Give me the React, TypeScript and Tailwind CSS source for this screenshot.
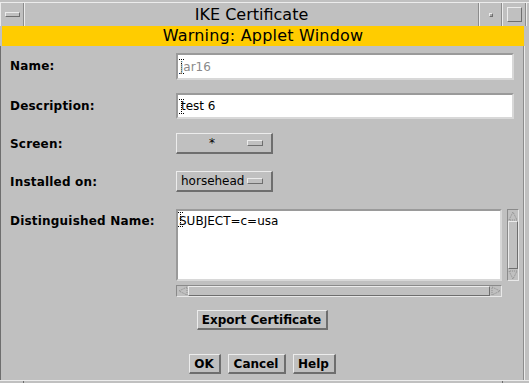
import React from "react";

const raised = "border border-t-[#ececec] border-l-[#ececec] border-b-[#6e6e6e] border-r-[#6e6e6e]";
const sunken = "border-2 border-t-[#9a9a9a] border-l-[#9a9a9a] border-b-[#d8d8d8] border-r-[#d8d8d8]";

function IBeam() {
  return (
    <svg width="5" height="15" viewBox="0 0 5 15" className="shrink-0">
      <path d="M0 0.5h5M2.5 0v15M0 14.5h5" stroke="#000" strokeWidth="1" strokeDasharray="1 1" fill="none" />
    </svg>
  );
}

function Arrow({ dir }: { dir: "up" | "down" | "left" | "right" }) {
  const pts = {
    up: "1,9 5,1 9,9",
    down: "1,1 5,9 9,1",
    left: "9,1 1,5 9,9",
    right: "1,1 9,5 1,9",
  }[dir];
  return (
    <svg width="10" height="10" viewBox="0 0 10 10">
      <polygon points={pts} fill="none" stroke="#8a8a8a" strokeWidth="1" strokeDasharray="1 1" />
    </svg>
  );
}

function Choice({ value, left }: { value: string; left?: boolean }) {
  return (
    <div className={`flex h-[21px] w-[97px] items-center ${raised} border-r-2 border-b-2`}>
      <span className={`flex-1 text-[12px] text-black ${left ? "pl-[4px] text-left" : "text-center"}`}>
        {value}
      </span>
      <span className={`mr-[8px] h-[6px] w-[16px] ${raised}`} />
    </div>
  );
}

function Button({ label, w }: { label: string; w: string }) {
  return (
    <div
      className={`flex h-[20px] ${w} items-center justify-center ${raised} border-r-2 border-b-2 text-[12px] font-bold text-black`}
    >
      {label}
    </div>
  );
}

export default function App() {
  return (
    <div className="flex h-[383px] w-[529px] flex-col overflow-hidden bg-[#c0c0c0] font-['DejaVu_Sans',sans-serif] text-black">
      {/* title bar */}
      <div className="h-[26px] shrink-0 pt-[2px]">
        <div className="flex h-full border-t border-[#ececec]">
          <div className="flex w-[24px] items-center justify-center border-l border-r border-l-[#ececec] border-r-[#8c8c8c]">
            <span className={`h-[5px] w-[15px] ${raised}`} />
          </div>
          <div className="flex w-[455px] items-center justify-center border-l border-r border-l-[#ececec] border-r-[#8c8c8c] text-[16px]">
            IKE Certificate
          </div>
          <div className="flex w-[23px] items-center justify-center border-l border-r border-l-[#ececec] border-r-[#8c8c8c]">
            <span className="h-[4px] w-[4px] border border-t-[#ececec] border-l-[#ececec] border-b-[#6e6e6e] border-r-[#6e6e6e] bg-[#a8a8a8]" />
          </div>
          <div className="flex w-[24px] items-center justify-center border-l border-r border-l-[#ececec] border-r-[#8c8c8c]">
            <span className="h-[15px] w-[15px] border border-t-[#ececec] border-l-[#ececec] border-b-[#6e6e6e] border-r-[#6e6e6e]" />
          </div>
          <div className="flex-1 border-l border-[#ececec]" />
        </div>
      </div>

      {/* warning band */}
      <div className="ml-[2px] mr-[5px] flex h-[20px] shrink-0 items-center justify-center bg-[#ffcc00] text-[16px] tracking-[0.2px]">
        Warning: Applet Window
      </div>

      {/* content */}
      <div className="flex flex-1">
        <div className="flex flex-1 flex-col border-l border-r border-l-[#6e6e6e] border-r-[#8c8c8c]">
          {/* Name */}
          <div className="mt-[7px] flex">
            <div className="w-[175px] pl-[9px] pt-[4px] text-[12px] font-bold tracking-[0.2px]">Name:</div>
            <div className={`flex h-[27px] w-[338px] items-center bg-white pl-[1px] ${sunken}`}>
              <IBeam />
              <span className="-ml-[4px] text-[12px] text-[#8a8a8a]">jar16</span>
            </div>
          </div>

          {/* Description */}
          <div className="mt-[13px] flex">
            <div className="w-[175px] pl-[9px] pt-[4px] text-[12px] font-bold tracking-[0.2px]">Description:</div>
            <div className={`flex h-[26px] w-[338px] items-center bg-white pl-[1px] ${sunken}`}>
              <IBeam />
              <span className="-ml-[3px] text-[12px]">test 6</span>
            </div>
          </div>

          {/* Screen */}
          <div className="mt-[14px] flex items-center">
            <div className="w-[175px] pl-[9px] text-[12px] font-bold tracking-[0.2px]">Screen:</div>
            <Choice value="*" />
          </div>

          {/* Installed on */}
          <div className="mt-[17px] flex items-center">
            <div className="w-[175px] pl-[9px] text-[12px] font-bold tracking-[0.2px]">Installed on:</div>
            <Choice value="horsehead" left />
          </div>

          {/* Distinguished Name */}
          <div className="mt-[17px] flex">
            <div className="w-[175px] pl-[9px] pt-[3px] text-[12px] font-bold tracking-[0.2px]">Distinguished Name:</div>
            <div className="flex flex-col">
              <div className="flex">
                <div className={`flex h-[72px] w-[326px] items-start bg-white pt-[1px] ${sunken}`}>
                  <IBeam />
                  <span className="-ml-[4px] text-[12px]">SUBJECT=c=usa</span>
                </div>
                <div className="ml-[5px] flex h-[72px] w-[12px] flex-col border border-t-[#8a8a8a] border-l-[#8a8a8a] border-b-[#e8e8e8] border-r-[#e8e8e8]">
                  <div className="flex h-[11px] items-center justify-center">
                    <Arrow dir="up" />
                  </div>
                  <div className={`flex-1 ${raised}`} />
                  <div className="flex h-[11px] items-center justify-center">
                    <Arrow dir="down" />
                  </div>
                </div>
              </div>
              <div className="mt-[4px] flex h-[12px] w-[326px] border border-t-[#8a8a8a] border-l-[#8a8a8a] border-b-[#e8e8e8] border-r-[#e8e8e8]">
                <div className="flex w-[11px] items-center justify-center">
                  <Arrow dir="left" />
                </div>
                <div className={`flex-1 ${raised}`} />
                <div className="flex w-[11px] items-center justify-center">
                  <Arrow dir="right" />
                </div>
              </div>
            </div>
          </div>

          {/* Export */}
          <div className="mt-[13px] flex justify-center">
            <Button label="Export Certificate" w="w-[131px]" />
          </div>

          {/* OK / Cancel / Help */}
          <div className="mt-[24px] flex justify-center gap-[7px]">
            <Button label="OK" w="w-[32px]" />
            <Button label="Cancel" w="w-[58px]" />
            <Button label="Help" w="w-[43px]" />
          </div>
        </div>
        <div className="w-[5px] border-l border-[#ececec]" />
      </div>

      {/* bottom frame */}
      <div className="flex h-[3px] shrink-0 border-t border-[#ececec]">
        <div className="w-[24px] border-r border-[#6e6e6e]" />
        <div className="w-[479px] border-r border-[#6e6e6e]" />
      </div>
    </div>
  );
}
